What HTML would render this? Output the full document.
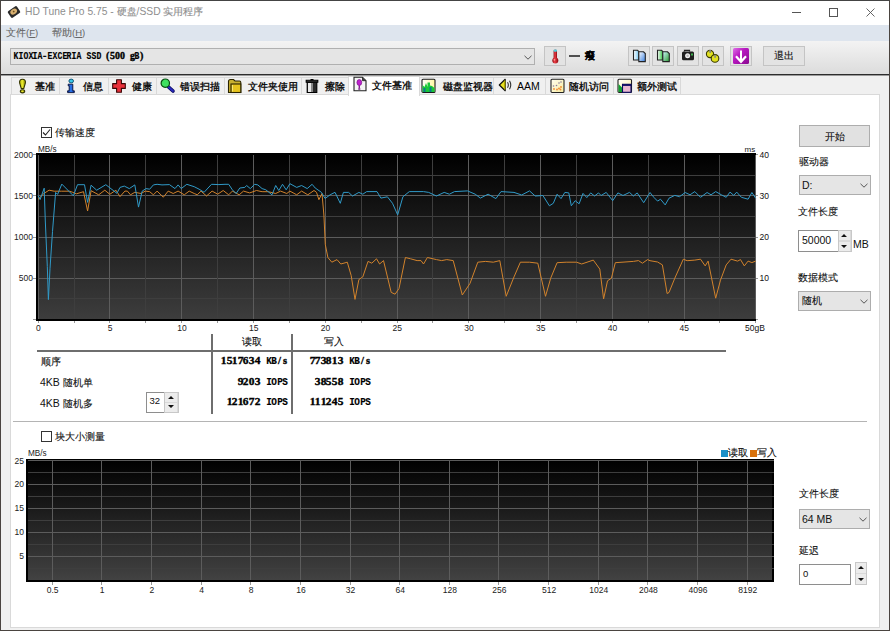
<!DOCTYPE html><html><head><meta charset="utf-8"><style>
*{margin:0;padding:0;box-sizing:border-box}
html,body{width:890px;height:631px;overflow:hidden;background:#f0f0f0;font-family:"Liberation Sans",sans-serif}
.abs{position:absolute}
.t{position:absolute;white-space:nowrap;line-height:1}
.btn{position:absolute;background:#e3e3e3;border:1px solid #c4c4c4}
.btn2{position:absolute;background:#e1e1e1;border:1px solid #adadad}
.cmb{position:absolute;background:#e5e5e5;border:1px solid #adadad}
.tab{position:absolute;top:77px;height:17px;background:#f0f0f0;border:1px solid #d9d9d9;border-bottom:none}
.chev{position:absolute;width:5px;height:5px;border-right:1px solid #444;border-bottom:1px solid #444;transform:rotate(45deg)}
</style></head><body>
<div class="abs" style="left:0;top:0;width:890px;height:631px;border:1px solid #4a4440;border-top-color:#444"></div><div class="abs" style="left:1px;top:1px;width:888px;height:24px;background:#fff"></div><div class="abs" style="left:1px;top:25px;width:888px;height:16px;background:#dee5ee"></div><div class="abs" style="left:1px;top:41px;width:888px;height:33px;background:linear-gradient(#f3f3f3,#dcdcdc)"></div><div class="abs" style="left:1px;top:74px;width:888px;height:1px;background:#2c2c2c"></div><div class="abs" style="left:1px;top:75px;width:888px;height:1px;background:#9a9a9a"></div><div class="abs" style="left:10px;top:94px;width:870px;height:534px;background:#fff;border:1px solid #d9d9d9"></div><div class="tab" style="left:11px;width:49px"></div><div class="tab" style="left:59px;width:50px"></div><div class="tab" style="left:108px;width:49px"></div><div class="tab" style="left:156px;width:69px"></div><div class="tab" style="left:224px;width:78px"></div><div class="tab" style="left:301px;width:48px"></div><div class="abs" style="left:348px;top:76px;width:72px;height:20px;background:#fff;border:1px solid #d9d9d9;border-bottom:none"></div><div class="tab" style="left:419px;width:75px"></div><div class="tab" style="left:493px;width:53px"></div><div class="tab" style="left:545px;width:69px"></div><div class="tab" style="left:613px;width:68px"></div><svg class="abs" style="left:0;top:0" width="890" height="631" viewBox="0 0 890 631"><defs><linearGradient id="g1" x1="0" y1="0" x2="0" y2="1"><stop offset="0" stop-color="#000"/><stop offset="1" stop-color="#3d3d3d"/></linearGradient><linearGradient id="g2" x1="0" y1="0" x2="0" y2="1"><stop offset="0" stop-color="#000"/><stop offset="1" stop-color="#424242"/></linearGradient></defs><rect x="36" y="153" width="720" height="168" fill="#000"/><rect x="38" y="155" width="718" height="164" fill="url(#g1)"/><rect x="38" y="175" width="718" height="1" fill="#3e3e3e"/><rect x="38" y="195" width="718" height="1" fill="#5c5c5c"/><rect x="38" y="216" width="718" height="1" fill="#3e3e3e"/><rect x="38" y="237" width="718" height="1" fill="#5c5c5c"/><rect x="38" y="257" width="718" height="1" fill="#3e3e3e"/><rect x="38" y="278" width="718" height="1" fill="#5c5c5c"/><rect x="38" y="298" width="718" height="1" fill="#3e3e3e"/><rect x="38" y="155" width="1" height="164" fill="#5c5c5c"/><rect x="74" y="155" width="1" height="164" fill="#3e3e3e"/><rect x="109" y="155" width="1" height="164" fill="#5c5c5c"/><rect x="145" y="155" width="1" height="164" fill="#3e3e3e"/><rect x="181" y="155" width="1" height="164" fill="#5c5c5c"/><rect x="217" y="155" width="1" height="164" fill="#3e3e3e"/><rect x="253" y="155" width="1" height="164" fill="#5c5c5c"/><rect x="289" y="155" width="1" height="164" fill="#3e3e3e"/><rect x="325" y="155" width="1" height="164" fill="#5c5c5c"/><rect x="361" y="155" width="1" height="164" fill="#3e3e3e"/><rect x="397" y="155" width="1" height="164" fill="#5c5c5c"/><rect x="432" y="155" width="1" height="164" fill="#3e3e3e"/><rect x="468" y="155" width="1" height="164" fill="#5c5c5c"/><rect x="504" y="155" width="1" height="164" fill="#3e3e3e"/><rect x="540" y="155" width="1" height="164" fill="#5c5c5c"/><rect x="576" y="155" width="1" height="164" fill="#3e3e3e"/><rect x="612" y="155" width="1" height="164" fill="#5c5c5c"/><rect x="648" y="155" width="1" height="164" fill="#3e3e3e"/><rect x="684" y="155" width="1" height="164" fill="#5c5c5c"/><rect x="719" y="155" width="1" height="164" fill="#3e3e3e"/><rect x="755" y="155" width="1" height="164" fill="#5c5c5c"/><polyline points="38,199.3 44.1,193.3 49.1,190.2 54.2,191.2 61.3,191.2 69.4,191.2 72.4,192.2 76.4,193.8 83.5,191.7 87.6,211 91.1,190.7 98.7,194.8 104.8,190.2 109.8,194.3 115.9,190.2 120,196.6 124.9,191.1 127.4,191.1 130.5,194.8 134.8,192.3 141,193.5 145.3,191.1 149.7,191.7 153.4,194.8 157.1,191.1 163.3,197.2 168.2,191.1 173.2,193.5 178.1,191.1 184.3,194.8 189.2,191.1 194.2,193.5 197.3,194.8 201,191.1 206.5,196 212.1,191.1 217.7,194.2 223.2,190.5 228.7,194.8 232.4,191.1 239.2,194.8 243.5,191.1 249.7,192.9 256.5,190.5 262.1,191.7 268.3,191.7 275.7,193.5 280.6,191.1 286.8,193.5 289.9,191.1 296.7,194.8 301.6,191.1 307.8,194.8 314,190.5 316.5,192.3 318.9,199.7 322,193.5 323.9,215 325.3,244.6 327.9,257.5 331.8,262.2 337,259.6 340.8,264 347.3,262.2 351.2,275.6 355,299.4 358.9,279.5 362.8,276.9 368,261.4 371.8,263.2 376.5,258.8 379.6,264 383.5,260.6 391.2,292.4 395.1,294.2 399,288.5 405.4,257.5 410.6,258.8 417.1,260.6 421,260.6 423.5,264 427.4,257.5 436.4,259.6 441.6,260.6 446.8,259.6 453.2,260.6 462.3,295 470,283.4 477.8,262.2 485.5,261.4 493.3,262.2 499.8,260.6 506.2,296.3 514,276.9 520.4,262.2 529.5,262.2 537.8,263.2 545.5,296.3 550.7,278.2 557.1,262.7 566.2,262.2 576.5,262.2 581.7,264 593.3,260.1 599.8,269.1 603.6,298.9 607.5,280.8 611.4,278.2 615.3,262.7 633.4,261.4 638.5,260.6 642.4,263.2 647.6,259.6 650,260.7 657.6,262 662.4,264.9 667.1,293.5 669,292.5 674.8,278.2 683.3,259.2 687.1,260.7 694.8,260.1 700.5,259.2 705.2,265.9 708.1,261.1 715.7,298.2 720.5,280.1 726.2,264.9 731,259.2 737.6,261.1 740.5,259.6 744.3,265.9 748.1,261.1 751.9,262.6 755.7,261.1" fill="none" stroke="#d2832c" stroke-width="1.0" stroke-linejoin="round"/><polyline points="38,195.5 40.1,199.6 44.2,188.2 45.3,221 47.3,266.6 48.4,299.6 50,268.7 52.5,231.5 55.6,192.4 57.6,194.4 61.8,184.1 73.4,195.8 77.5,184.7 84.5,184.7 87.6,202.4 91.1,185.2 96.7,190.2 105.8,184.7 116.9,193.3 120,187.4 124.3,186.1 129.3,188.6 134.8,184.9 138.5,207.1 142.2,191.1 146,188.6 149.7,189.2 153.4,184.9 157.1,184.3 162,184.9 169.4,184.6 175,188.6 178.1,184.9 181.2,188.6 186.8,184.3 194.2,186.7 199.1,189.2 204.1,192.3 211.5,184.3 218.9,184.6 225,184.3 228.7,184.3 232.4,189.8 236.1,193.5 239.8,188 244.8,187.4 246.6,185.5 250.3,188.6 254.7,184.3 257.8,184.9 262.1,188.6 265.8,189.8 272,194.8 275.7,185.5 278.8,190.5 282.5,184.3 286.2,189.8 289.9,183.7 296.7,187.4 301.6,185.5 307.2,188.6 312.1,184.3 315.2,188 321.4,192.3 325.1,198.5 330.1,194.8 335,192.3 340.3,203.3 343.4,192.4 348.6,192.4 352.5,196 358.9,192.4 362.8,194.2 366.7,191.6 377,191.6 380.9,198.1 387.4,196.8 392.5,203.3 397.7,214.9 402.9,196.8 409.3,191.6 423.5,191.6 428.7,192.4 436.4,196 444.2,192.4 449.4,194.2 454.5,191.6 467.5,190.9 475.2,194.2 480.4,198.1 488.1,194.2 495.9,198.6 501,191.6 514,192.4 521.7,195 529.5,190.9 535.2,196 542.9,195.5 549.4,205.8 553.3,203.3 557.1,194.2 561,198.6 564.9,192.4 568.8,192.9 571.3,205.8 575.2,200.7 579.1,203.8 583,193.4 586.8,197.6 590.7,192.9 594.6,196 598.5,192.9 601.1,195.5 606.2,192.4 612.7,200.7 617.9,192.9 623,195.5 629.5,192.4 633.4,196 637.2,192.9 643.7,202.7 650,192.5 653.8,197.3 657.6,201.1 660.5,199.2 665.2,204.9 669,198.2 674.8,195.4 679.5,196.7 685.2,192.5 690,194.8 694.8,191.6 700.5,197.3 707.1,192.5 711,194.8 715.7,191.6 721.4,194.8 726.2,197.3 730,192.1 733.8,195.4 736.7,192.1 741.4,197.3 748.1,199.2 751.9,192.5 755.7,198.2" fill="none" stroke="#309ac8" stroke-width="1.0" stroke-linejoin="round"/><rect x="38" y="321" width="1" height="2" fill="#999"/><rect x="74" y="321" width="1" height="2" fill="#999"/><rect x="109" y="321" width="1" height="2" fill="#999"/><rect x="145" y="321" width="1" height="2" fill="#999"/><rect x="181" y="321" width="1" height="2" fill="#999"/><rect x="217" y="321" width="1" height="2" fill="#999"/><rect x="253" y="321" width="1" height="2" fill="#999"/><rect x="289" y="321" width="1" height="2" fill="#999"/><rect x="325" y="321" width="1" height="2" fill="#999"/><rect x="361" y="321" width="1" height="2" fill="#999"/><rect x="397" y="321" width="1" height="2" fill="#999"/><rect x="432" y="321" width="1" height="2" fill="#999"/><rect x="468" y="321" width="1" height="2" fill="#999"/><rect x="504" y="321" width="1" height="2" fill="#999"/><rect x="540" y="321" width="1" height="2" fill="#999"/><rect x="576" y="321" width="1" height="2" fill="#999"/><rect x="612" y="321" width="1" height="2" fill="#999"/><rect x="648" y="321" width="1" height="2" fill="#999"/><rect x="684" y="321" width="1" height="2" fill="#999"/><rect x="719" y="321" width="1" height="2" fill="#999"/><rect x="755" y="321" width="1" height="2" fill="#999"/><rect x="33" y="154" width="3" height="1" fill="#999"/><rect x="756" y="154" width="2" height="1" fill="#999"/><rect x="33" y="195" width="3" height="1" fill="#999"/><rect x="756" y="195" width="2" height="1" fill="#999"/><rect x="33" y="237" width="3" height="1" fill="#999"/><rect x="756" y="237" width="2" height="1" fill="#999"/><rect x="33" y="278" width="3" height="1" fill="#999"/><rect x="756" y="278" width="2" height="1" fill="#999"/><rect x="33" y="319" width="3" height="1" fill="#999"/><rect x="756" y="319" width="2" height="1" fill="#999"/><rect x="26" y="459" width="748" height="123" fill="#000"/><rect x="28" y="460" width="744" height="120" fill="url(#g2)"/><rect x="28" y="460" width="746" height="1" fill="#5c5c5c"/><rect x="28" y="472" width="746" height="1" fill="#3e3e3e"/><rect x="28" y="484" width="746" height="1" fill="#5c5c5c"/><rect x="28" y="496" width="746" height="1" fill="#3e3e3e"/><rect x="28" y="508" width="746" height="1" fill="#5c5c5c"/><rect x="28" y="520" width="746" height="1" fill="#3e3e3e"/><rect x="28" y="532" width="746" height="1" fill="#5c5c5c"/><rect x="28" y="544" width="746" height="1" fill="#3e3e3e"/><rect x="28" y="556" width="746" height="1" fill="#5c5c5c"/><rect x="28" y="568" width="746" height="1" fill="#3e3e3e"/><rect x="52" y="460" width="1" height="120" fill="#5c5c5c"/><rect x="52" y="582" width="1" height="3" fill="#999"/><rect x="101" y="460" width="1" height="120" fill="#5c5c5c"/><rect x="101" y="582" width="1" height="3" fill="#999"/><rect x="151" y="460" width="1" height="120" fill="#5c5c5c"/><rect x="151" y="582" width="1" height="3" fill="#999"/><rect x="201" y="460" width="1" height="120" fill="#5c5c5c"/><rect x="201" y="582" width="1" height="3" fill="#999"/><rect x="250" y="460" width="1" height="120" fill="#5c5c5c"/><rect x="250" y="582" width="1" height="3" fill="#999"/><rect x="300" y="460" width="1" height="120" fill="#5c5c5c"/><rect x="300" y="582" width="1" height="3" fill="#999"/><rect x="350" y="460" width="1" height="120" fill="#5c5c5c"/><rect x="350" y="582" width="1" height="3" fill="#999"/><rect x="399" y="460" width="1" height="120" fill="#5c5c5c"/><rect x="399" y="582" width="1" height="3" fill="#999"/><rect x="449" y="460" width="1" height="120" fill="#5c5c5c"/><rect x="449" y="582" width="1" height="3" fill="#999"/><rect x="498" y="460" width="1" height="120" fill="#5c5c5c"/><rect x="498" y="582" width="1" height="3" fill="#999"/><rect x="548" y="460" width="1" height="120" fill="#5c5c5c"/><rect x="548" y="582" width="1" height="3" fill="#999"/><rect x="598" y="460" width="1" height="120" fill="#5c5c5c"/><rect x="598" y="582" width="1" height="3" fill="#999"/><rect x="647" y="460" width="1" height="120" fill="#5c5c5c"/><rect x="647" y="582" width="1" height="3" fill="#999"/><rect x="697" y="460" width="1" height="120" fill="#5c5c5c"/><rect x="697" y="582" width="1" height="3" fill="#999"/><rect x="747" y="460" width="1" height="120" fill="#5c5c5c"/><rect x="747" y="582" width="1" height="3" fill="#999"/><rect x="37" y="350" width="689" height="2" fill="#6e6e6e"/><rect x="211" y="334" width="2" height="80" fill="#6e6e6e"/><rect x="291" y="334" width="2" height="80" fill="#6e6e6e"/><rect x="13" y="421" width="854" height="1" fill="#b4b4b4"/></svg><svg class="abs" style="left:7px;top:5px" width="14" height="14" viewBox="0 0 14 14"><g transform="rotate(-35 7 7)"><rect x="1.5" y="3" width="11" height="8" rx="1.5" fill="#2a2a2a"/><ellipse cx="7" cy="6.5" rx="3.6" ry="2.6" fill="#d8b070"/><circle cx="7" cy="6.5" r="0.9" fill="#6b4e1e"/></g></svg><div class="t" style="left:25px;top:7.2px;font-size:10.3px;color:#8e8e8e;">HD Tune Pro 5.75 - <span style="font-size:10px;-webkit-text-stroke:0.12px currentColor">硬盘</span>/SSD <span style="font-size:10px;-webkit-text-stroke:0.12px currentColor">实用程序</span></div>
<div class="abs" style="left:792px;top:12px;width:9px;height:1px;background:#555"></div><div class="abs" style="left:829px;top:8px;width:9px;height:9px;border:1px solid #555"></div><svg class="abs" style="left:866px;top:8px" width="9" height="9" viewBox="0 0 9 9"><path d="M0.5 0.5L8.5 8.5M8.5 0.5L0.5 8.5" stroke="#555" stroke-width="0.9"/></svg><div class="t" style="left:6px;top:28px;font-size:9.5px;color:#666;"><span style="font-size:10px;-webkit-text-stroke:0.12px currentColor">文件</span>(<u>F</u>)</div>
<div class="t" style="left:52px;top:28px;font-size:9.5px;color:#666;"><span style="font-size:10px;-webkit-text-stroke:0.12px currentColor">帮助</span>(<u>H</u>)</div>
<div class="abs" style="left:10px;top:48px;width:525px;height:17px;background:#e5e5e5;border:1px solid #b0b0b0"></div><div class="t" style="left:13.00px;top:50.3px;font:bold 10px 'Liberation Serif',serif;color:#000;-webkit-text-stroke:0.35px #000"><span style="display:inline-block;width:4.87px;text-align:center;font-family:'Liberation Mono',monospace;-webkit-text-stroke:0.15px #000"><span style="display:inline-block;transform:scaleX(0.812)">K</span></span><span style="display:inline-block;width:4.87px;text-align:center;font-family:'Liberation Mono',monospace;-webkit-text-stroke:0.15px #000"><span style="display:inline-block;transform:scaleX(0.812)">I</span></span><span style="display:inline-block;width:4.87px;text-align:center;font-family:'Liberation Mono',monospace;-webkit-text-stroke:0.15px #000"><span style="display:inline-block;transform:scaleX(0.812)">O</span></span><span style="display:inline-block;width:4.87px;text-align:center;font-family:'Liberation Mono',monospace;-webkit-text-stroke:0.15px #000"><span style="display:inline-block;transform:scaleX(0.812)">X</span></span><span style="display:inline-block;width:4.87px;text-align:center;font-family:'Liberation Mono',monospace;-webkit-text-stroke:0.15px #000"><span style="display:inline-block;transform:scaleX(0.812)">I</span></span><span style="display:inline-block;width:4.87px;text-align:center;font-family:'Liberation Mono',monospace;-webkit-text-stroke:0.15px #000"><span style="display:inline-block;transform:scaleX(0.812)">A</span></span><span style="display:inline-block;width:4.87px;text-align:center"><span style="display:inline-block;transform:scaleX(1.000)">-</span></span><span style="display:inline-block;width:4.87px;text-align:center;font-family:'Liberation Mono',monospace;-webkit-text-stroke:0.15px #000"><span style="display:inline-block;transform:scaleX(0.812)">E</span></span><span style="display:inline-block;width:4.87px;text-align:center;font-family:'Liberation Mono',monospace;-webkit-text-stroke:0.15px #000"><span style="display:inline-block;transform:scaleX(0.812)">X</span></span><span style="display:inline-block;width:4.87px;text-align:center;font-family:'Liberation Mono',monospace;-webkit-text-stroke:0.15px #000"><span style="display:inline-block;transform:scaleX(0.812)">C</span></span><span style="display:inline-block;width:4.87px;text-align:center;font-family:'Liberation Mono',monospace;-webkit-text-stroke:0.15px #000"><span style="display:inline-block;transform:scaleX(0.812)">E</span></span><span style="display:inline-block;width:4.87px;text-align:center;font-family:'Liberation Mono',monospace;-webkit-text-stroke:0.15px #000"><span style="display:inline-block;transform:scaleX(0.812)">R</span></span><span style="display:inline-block;width:4.87px;text-align:center;font-family:'Liberation Mono',monospace;-webkit-text-stroke:0.15px #000"><span style="display:inline-block;transform:scaleX(0.812)">I</span></span><span style="display:inline-block;width:4.87px;text-align:center;font-family:'Liberation Mono',monospace;-webkit-text-stroke:0.15px #000"><span style="display:inline-block;transform:scaleX(0.812)">A</span></span><span style="display:inline-block;width:4.87px"></span><span style="display:inline-block;width:4.87px;text-align:center;font-family:'Liberation Mono',monospace;-webkit-text-stroke:0.15px #000"><span style="display:inline-block;transform:scaleX(0.812)">S</span></span><span style="display:inline-block;width:4.87px;text-align:center;font-family:'Liberation Mono',monospace;-webkit-text-stroke:0.15px #000"><span style="display:inline-block;transform:scaleX(0.812)">S</span></span><span style="display:inline-block;width:4.87px;text-align:center;font-family:'Liberation Mono',monospace;-webkit-text-stroke:0.15px #000"><span style="display:inline-block;transform:scaleX(0.812)">D</span></span><span style="display:inline-block;width:4.87px"></span><span style="display:inline-block;width:4.87px;text-align:center"><span style="display:inline-block;transform:scaleX(1.000)">(</span></span><span style="display:inline-block;width:4.87px;text-align:center"><span style="display:inline-block;transform:scaleX(0.993)">5</span></span><span style="display:inline-block;width:4.87px;text-align:center"><span style="display:inline-block;transform:scaleX(0.993)">0</span></span><span style="display:inline-block;width:4.87px;text-align:center"><span style="display:inline-block;transform:scaleX(0.993)">0</span></span><span style="display:inline-block;width:4.87px"></span><span style="display:inline-block;width:4.87px;text-align:center"><span style="display:inline-block;transform:scaleX(0.993)">g</span></span><span style="display:inline-block;width:4.87px;text-align:center;font-family:'Liberation Mono',monospace;-webkit-text-stroke:0.15px #000"><span style="display:inline-block;transform:scaleX(0.812)">B</span></span><span style="display:inline-block;width:4.87px;text-align:center"><span style="display:inline-block;transform:scaleX(1.000)">)</span></span></div>
<svg class="abs" style="left:524px;top:54.5px" width="8" height="5" viewBox="0 0 8 5"><path d="M0.5 0.8L4 4.2L7.5 0.8" stroke="#555" stroke-width="1" fill="none"/></svg><div class="btn" style="left:544px;top:46px;width:22px;height:20px"></div><svg class="abs" style="left:544px;top:46px" width="22" height="20" viewBox="544 46 22 20"><defs><linearGradient id="th" x1="0" y1="0" x2="1" y2="0"><stop offset="0" stop-color="#8a0a10"/><stop offset=".4" stop-color="#f04048"/><stop offset="1" stop-color="#8a0a10"/></linearGradient></defs><rect x="553.6" y="49.5" width="3.4" height="10" rx="1.6" fill="url(#th)"/><rect x="553.6" y="49.5" width="3.4" height="2.2" rx="1" fill="#50d0e0"/><circle cx="555.3" cy="60.5" r="3" fill="url(#th)"/><circle cx="554.4" cy="59.8" r="0.9" fill="#ff9a9a"/></svg><div class="abs" style="left:569px;top:55px;width:11px;height:1.6px;background:#505050"></div><div class="t" style="left:585px;top:50px;font-size:11px;color:#000;font-weight:bold"><span style="font-size:10px;-webkit-text-stroke:0.12px currentColor">癈</span></div>
<div class="btn" style="left:628px;top:46px;width:22px;height:20px"></div><div class="btn" style="left:652px;top:46px;width:22px;height:20px"></div><div class="btn" style="left:677px;top:46px;width:22px;height:20px"></div><div class="btn" style="left:702px;top:46px;width:22px;height:20px"></div><div class="btn" style="left:730px;top:46px;width:22px;height:20px"></div><div class="btn" style="left:763px;top:46px;width:42px;height:20px"></div><div class="t" style="left:774px;top:50px;font-size:11px;color:#111;"><span style="font-size:10px;-webkit-text-stroke:0.12px currentColor">退出</span></div>
<svg class="abs" style="left:628px;top:46px" width="22" height="20" viewBox="628 46 22 20"><defs><linearGradient id="cp1" x1="0" y1="0" x2="1" y2="0"><stop offset="0" stop-color="#fff"/><stop offset="1" stop-color="#7ac8f0"/></linearGradient><linearGradient id="cp2" x1="0" y1="0" x2="1" y2="1"><stop offset="0" stop-color="#fff"/><stop offset="1" stop-color="#3a80e0"/></linearGradient></defs><path d="M633.5 50.2H637.5L638.8 51.5V60H633.5Z" fill="url(#cp1)" stroke="#222" stroke-width="1.1"/><path d="M638.8 51.8H643.5L645.3 53.6V61.6H638.8Z" fill="url(#cp2)" stroke="#222" stroke-width="1.1"/></svg><svg class="abs" style="left:652px;top:46px" width="22" height="20" viewBox="652 46 22 20"><defs><linearGradient id="cg1" x1="0" y1="0" x2="1" y2="0"><stop offset="0" stop-color="#fff"/><stop offset="1" stop-color="#30c040"/></linearGradient><linearGradient id="cg2" x1="0" y1="0" x2="1" y2="1"><stop offset="0" stop-color="#d0f8ff"/><stop offset="1" stop-color="#2a9a30"/></linearGradient></defs><path d="M657.5 50.2H661.5L662.8 51.5V60H657.5Z" fill="url(#cg1)" stroke="#222" stroke-width="1.1"/><path d="M662.8 51.8H667.5L669.3 53.6V61.6H662.8Z" fill="url(#cg2)" stroke="#222" stroke-width="1.1"/></svg><svg class="abs" style="left:677px;top:46px" width="22" height="20" viewBox="677 46 22 20"><path d="M684.5 51.5V50.3H689.5V51.5" stroke="#222" stroke-width="1.2" fill="none"/><rect x="682" y="51.5" width="12" height="8.8" rx="1.5" fill="#1e1e1e"/><circle cx="687.6" cy="55.8" r="2.5" fill="#f0f0f0"/><circle cx="687.6" cy="55.8" r="1.2" fill="#bbb"/><rect x="691" y="53.5" width="2" height="2" fill="#3ab04a"/></svg><svg class="abs" style="left:702px;top:46px" width="22" height="20" viewBox="702 46 22 20"><g stroke="#3a3a00" stroke-width="1.1"><circle cx="710" cy="54" r="3.6" fill="#e0e020"/><circle cx="715" cy="58.4" r="3.8" fill="#e0e020"/></g><rect x="709.3" y="50" width="1.6" height="3" fill="#888"/><rect x="714.3" y="54.8" width="1.6" height="3" fill="#888"/></svg><svg class="abs" style="left:730px;top:46px" width="22" height="20" viewBox="730 46 22 20"><defs><linearGradient id="pg" x1="0" y1="0" x2="1" y2="1"><stop offset="0" stop-color="#e070e8"/><stop offset=".4" stop-color="#b818c0"/><stop offset="1" stop-color="#8a0a90"/></linearGradient></defs><rect x="733" y="48" width="16" height="16" rx="1.5" fill="url(#pg)"/><path d="M741 50.5V61" stroke="#fff" stroke-width="2"/><path d="M736 56.3L741 61.8L746 56.3" stroke="#fff" stroke-width="2.2" fill="none" stroke-linejoin="miter"/></svg><div class="t" style="left:35px;top:81px;font-size:10.5px;color:#000;"><span style="font-size:10px;-webkit-text-stroke:0.3px currentColor">基准</span></div>
<div class="t" style="left:83px;top:81px;font-size:10.5px;color:#000;"><span style="font-size:10px;-webkit-text-stroke:0.3px currentColor">信息</span></div>
<div class="t" style="left:132px;top:81px;font-size:10.5px;color:#000;"><span style="font-size:10px;-webkit-text-stroke:0.3px currentColor">健康</span></div>
<div class="t" style="left:180px;top:81px;font-size:10.5px;color:#000;"><span style="font-size:10px;-webkit-text-stroke:0.3px currentColor">错误扫描</span></div>
<div class="t" style="left:248px;top:81px;font-size:10.5px;color:#000;"><span style="font-size:10px;-webkit-text-stroke:0.3px currentColor">文件夹使用</span></div>
<div class="t" style="left:325px;top:81px;font-size:10.5px;color:#000;"><span style="font-size:10px;-webkit-text-stroke:0.3px currentColor">擦除</span></div>
<div class="t" style="left:372px;top:80px;font-size:10.5px;color:#000;"><span style="font-size:10px;-webkit-text-stroke:0.3px currentColor">文件基准</span></div>
<div class="t" style="left:443px;top:81px;font-size:10.5px;color:#000;"><span style="font-size:10px;-webkit-text-stroke:0.3px currentColor">磁盘监视器</span></div>
<div class="t" style="left:517px;top:81px;font-size:10.5px;color:#000;">AAM</div>
<div class="t" style="left:569px;top:81px;font-size:10.5px;color:#000;"><span style="font-size:10px;-webkit-text-stroke:0.3px currentColor">随机访问</span></div>
<div class="t" style="left:637px;top:81px;font-size:10.5px;color:#000;"><span style="font-size:10px;-webkit-text-stroke:0.3px currentColor">额外测试</span></div>
<svg class="abs" style="left:18px;top:78px" width="9" height="16" viewBox="0 0 9 16"><defs><linearGradient id="ex" x1="0" y1="0" x2="1" y2="0"><stop offset="0" stop-color="#9a9a00"/><stop offset=".45" stop-color="#f0f030"/><stop offset="1" stop-color="#8a8a00"/></linearGradient></defs><path d="M4.5 1.2C2.2 1.2 1.3 2.8 1.6 4.8L3.3 10.6H5.7L7.4 4.8C7.7 2.8 6.8 1.2 4.5 1.2Z" fill="url(#ex)" stroke="#343400" stroke-width="1.1"/><ellipse cx="4.5" cy="13.3" rx="2.2" ry="1.6" fill="url(#ex)" stroke="#343400" stroke-width="1.1"/></svg><svg class="abs" style="left:66px;top:78px" width="10" height="16" viewBox="0 0 10 16"><defs><linearGradient id="inf" x1="0" y1="0" x2="1" y2="0"><stop offset="0" stop-color="#0a2a9a"/><stop offset=".5" stop-color="#2a7af0"/><stop offset="1" stop-color="#0a2a9a"/></linearGradient></defs><ellipse cx="5.2" cy="3" rx="2.3" ry="1.9" fill="#38c8e8" stroke="#0a4a6a" stroke-width="0.9"/><path d="M2.2 6.2H6.8V12.8H8.3V14.6H1.6V12.8H3.2V7.8H2.2Z" fill="url(#inf)" stroke="#06103a" stroke-width="0.9"/></svg><svg class="abs" style="left:112px;top:79px" width="15" height="15" viewBox="0 0 15 15"><path d="M4.6 0.7H9.4V4.6H13.3V9.4H9.4V13.3H4.6V9.4H0.7V4.6H4.6Z" fill="#e8303a" stroke="#3a0606" stroke-width="1.1" stroke-linejoin="round"/></svg><svg class="abs" style="left:159px;top:77px" width="17" height="17" viewBox="0 0 17 17"><line x1="9" y1="9.5" x2="14" y2="14" stroke="#0a0a60" stroke-width="3.6" stroke-linecap="round"/><line x1="9" y1="9.5" x2="14" y2="14" stroke="#2a2ac0" stroke-width="1.8" stroke-linecap="round"/><circle cx="6.3" cy="6.2" r="4.2" fill="#3ee060" stroke="#064a10" stroke-width="1.2"/></svg><svg class="abs" style="left:227px;top:78px" width="15" height="16" viewBox="0 0 15 16"><path d="M1.5 3.5Q1.5 1.5 3.5 1.5H6.5L8 3H12.5Q13.8 3 13.8 4.5V14.5H1.5Z" fill="#c8b030" stroke="#2a2400" stroke-width="1.1"/><rect x="4" y="6" width="9.8" height="8.5" fill="#e6c41e" stroke="#2a2400" stroke-width="1.1"/><rect x="5" y="7" width="1" height="6.5" fill="#f8e878"/></svg><svg class="abs" style="left:305px;top:78px" width="14" height="16" viewBox="0 0 14 16"><path d="M1.2 2.3H12.8V4.3H1.2Z" fill="#444" stroke="#000" stroke-width="1.1"/><path d="M5.5 1H8.5V2.3H5.5Z" fill="#000"/><path d="M2.2 4.3H11.8V14.5H2.2Z" fill="#2a2a2a" stroke="#000" stroke-width="1.1"/><rect x="3" y="5" width="3.5" height="9" fill="#e8e8e8"/><rect x="6.5" y="5" width="1.5" height="9" fill="#888"/></svg><svg class="abs" style="left:353px;top:76px" width="14" height="16" viewBox="0 0 14 16"><path d="M1 1.2H9.5L13 4.7V14.8H1Z" fill="#f4f4f4" stroke="#222" stroke-width="1.1"/><path d="M9.5 1.2V4.7H13" fill="#444" stroke="#222" stroke-width="0.8"/><ellipse cx="6.3" cy="6.5" rx="2.4" ry="3" fill="#c020d0" stroke="#6a0a7a" stroke-width="0.6"/><path d="M5.6 9.3H7V12.3H5.6Z" fill="#8a1a9a"/><ellipse cx="6.3" cy="13" rx="1.3" ry="0.8" fill="#6a0a7a"/></svg><svg class="abs" style="left:421px;top:78px" width="15" height="16" viewBox="0 0 15 16"><defs><linearGradient id="dm" x1="0" y1="0" x2="1" y2="0"><stop offset="0" stop-color="#ffffff"/><stop offset="1" stop-color="#fff8a0"/></linearGradient></defs><rect x="1" y="1.2" width="13" height="13.3" rx="1" fill="url(#dm)" stroke="#1a1a1a" stroke-width="1.1"/><path d="M1.5 14V7L3.5 9L5 5L6.5 9V4.5H9V7.5L11 8L13.5 10V14Z" fill="#18c838"/><rect x="2.5" y="10" width="2" height="4" fill="#0a7a8a"/><rect x="8.5" y="9" width="2" height="5" fill="#0a7a8a"/></svg><svg class="abs" style="left:498px;top:78px" width="16" height="15" viewBox="0 0 16 15"><path d="M1.3 7L7.2 1.3V12.7Z" fill="#e8e020" stroke="#111" stroke-width="1.2" stroke-linejoin="round"/><rect x="6" y="2.5" width="1.4" height="9" fill="#b0a800"/><path d="M9.5 4.2Q11.2 7 9.5 9.8M11.5 2.8Q14 7 11.5 11.2" stroke="#333" stroke-width="1.1" fill="none"/></svg><svg class="abs" style="left:550px;top:78px" width="15" height="16" viewBox="0 0 15 16"><defs><linearGradient id="ra" x1="0" y1="0" x2="1" y2="1"><stop offset="0" stop-color="#fffef0"/><stop offset="1" stop-color="#f8eca0"/></linearGradient></defs><rect x="1" y="1.2" width="13" height="13.3" rx="1" fill="url(#ra)" stroke="#222" stroke-width="1.1"/><g fill="#f08a30"><circle cx="4" cy="11" r="0.9"/><circle cx="7" cy="11.5" r="0.9"/><circle cx="9" cy="10.5" r="0.9"/><circle cx="11" cy="9" r="0.9"/><circle cx="10.5" cy="11.5" r="0.9"/></g><g fill="#8a7a9a"><circle cx="3.5" cy="8" r="0.8"/><circle cx="6.5" cy="7.5" r="0.8"/><circle cx="9" cy="5" r="0.8"/><circle cx="11" cy="4" r="0.8"/></g></svg><svg class="abs" style="left:617px;top:78px" width="16" height="16" viewBox="0 0 16 16"><defs><linearGradient id="et" x1="0" y1="0" x2="1" y2="1"><stop offset="0" stop-color="#ffffff"/><stop offset="1" stop-color="#fff4a0"/></linearGradient></defs><rect x="1" y="1.2" width="13.5" height="13.3" rx="1" fill="url(#et)" stroke="#222" stroke-width="1.1"/><path d="M1.5 14V6L3.5 8L5.5 10V14Z" fill="#10a030"/><rect x="5.5" y="6.3" width="8.5" height="8" fill="#e8b8d0" stroke="#0a0a60" stroke-width="1.1"/><rect x="5.5" y="6.3" width="8.5" height="1.6" fill="#0a0a60"/></svg><div class="abs" style="left:41px;top:127px;width:11px;height:11px;border:1px solid #333;background:#fff"></div><svg class="abs" style="left:42px;top:128px" width="9" height="9" viewBox="0 0 9 9"><path d="M1 4.5L3.5 7L8 1.5" stroke="#222" stroke-width="1.1" fill="none"/></svg><div class="t" style="left:55px;top:127px;font-size:10.5px;color:#111;"><span style="font-size:10px;-webkit-text-stroke:0.12px currentColor">传输速度</span></div>
<div class="t" style="left:38px;top:145.5px;font-size:8.2px;color:#222;">MB/s</div>
<div class="t" style="left:744.5px;top:145.5px;font-size:8px;color:#222;">ms</div>
<div class="t" style="right:857px;top:150.5px;font-size:8.5px;color:#222">2000</div>
<div class="t" style="right:857px;top:191.6px;font-size:8.5px;color:#222">1500</div>
<div class="t" style="right:857px;top:232.7px;font-size:8.5px;color:#222">1000</div>
<div class="t" style="right:857px;top:273.8px;font-size:8.5px;color:#222">500</div>
<div class="t" style="left:759.5px;top:150.5px;font-size:8.5px;color:#111;">40</div>
<div class="t" style="left:759.5px;top:191.6px;font-size:8.5px;color:#111;">30</div>
<div class="t" style="left:759.5px;top:232.7px;font-size:8.5px;color:#111;">20</div>
<div class="t" style="left:759.5px;top:273.8px;font-size:8.5px;color:#111;">10</div>
<div class="t" style="left:18.4px;width:40px;text-align:center;top:324px;font-size:8.5px;color:#222">0</div>
<div class="t" style="left:90.2px;width:40px;text-align:center;top:324px;font-size:8.5px;color:#222">5</div>
<div class="t" style="left:161.9px;width:40px;text-align:center;top:324px;font-size:8.5px;color:#222">10</div>
<div class="t" style="left:233.7px;width:40px;text-align:center;top:324px;font-size:8.5px;color:#222">15</div>
<div class="t" style="left:305.4px;width:40px;text-align:center;top:324px;font-size:8.5px;color:#222">20</div>
<div class="t" style="left:377.2px;width:40px;text-align:center;top:324px;font-size:8.5px;color:#222">25</div>
<div class="t" style="left:449.0px;width:40px;text-align:center;top:324px;font-size:8.5px;color:#222">30</div>
<div class="t" style="left:520.7px;width:40px;text-align:center;top:324px;font-size:8.5px;color:#222">35</div>
<div class="t" style="left:592.5px;width:40px;text-align:center;top:324px;font-size:8.5px;color:#222">40</div>
<div class="t" style="left:664.2px;width:40px;text-align:center;top:324px;font-size:8.5px;color:#222">45</div>
<div class="t" style="left:745px;top:324px;font-size:8.5px;color:#111;">50gB</div>
<div class="t" style="left:242px;top:336px;font-size:10.5px;color:#111;"><span style="font-size:10px;-webkit-text-stroke:0.12px currentColor">读取</span></div>
<div class="t" style="left:324px;top:336px;font-size:10.5px;color:#111;"><span style="font-size:10px;-webkit-text-stroke:0.12px currentColor">写入</span></div>
<div class="t" style="left:41px;top:356px;font-size:10.5px;color:#111;"><span style="font-size:10px;-webkit-text-stroke:0.12px currentColor">顺序</span></div>
<div class="t" style="left:40px;top:377.2px;font-size:10.5px;color:#111;">4KB <span style="font-size:10px;-webkit-text-stroke:0.12px currentColor">随机单</span></div>
<div class="t" style="left:40px;top:397.8px;font-size:10.5px;color:#111;">4KB <span style="font-size:10px;-webkit-text-stroke:0.12px currentColor">随机多</span></div>
<div class="t" style="left:220.80px;top:354.5px;font:bold 10.5px 'Liberation Serif',serif;color:#000;-webkit-text-stroke:0.35px #000"><span style="display:inline-block;width:5.6px;text-align:center"><span style="display:inline-block;transform:scaleX(1.088)">1</span></span><span style="display:inline-block;width:5.6px;text-align:center"><span style="display:inline-block;transform:scaleX(1.088)">5</span></span><span style="display:inline-block;width:5.6px;text-align:center"><span style="display:inline-block;transform:scaleX(1.088)">1</span></span><span style="display:inline-block;width:5.6px;text-align:center"><span style="display:inline-block;transform:scaleX(1.088)">7</span></span><span style="display:inline-block;width:5.6px;text-align:center"><span style="display:inline-block;transform:scaleX(1.088)">6</span></span><span style="display:inline-block;width:5.6px;text-align:center"><span style="display:inline-block;transform:scaleX(1.088)">3</span></span><span style="display:inline-block;width:5.6px;text-align:center"><span style="display:inline-block;transform:scaleX(1.088)">4</span></span><span style="display:inline-block;width:5.6px"></span><span style="display:inline-block;width:5.6px;text-align:center;font-family:'Liberation Mono',monospace;-webkit-text-stroke:0.15px #000"><span style="display:inline-block;transform:scaleX(0.889)">K</span></span><span style="display:inline-block;width:5.6px;text-align:center;font-family:'Liberation Mono',monospace;-webkit-text-stroke:0.15px #000"><span style="display:inline-block;transform:scaleX(0.889)">B</span></span><span style="display:inline-block;width:5.6px;text-align:center"><span style="display:inline-block;transform:scaleX(1.000)">/</span></span><span style="display:inline-block;width:5.6px;text-align:center"><span style="display:inline-block;transform:scaleX(1.000)">s</span></span></div>
<div class="t" style="left:309.40px;top:354.5px;font:bold 10.5px 'Liberation Serif',serif;color:#000;-webkit-text-stroke:0.35px #000"><span style="display:inline-block;width:5.6px;text-align:center"><span style="display:inline-block;transform:scaleX(1.088)">7</span></span><span style="display:inline-block;width:5.6px;text-align:center"><span style="display:inline-block;transform:scaleX(1.088)">7</span></span><span style="display:inline-block;width:5.6px;text-align:center"><span style="display:inline-block;transform:scaleX(1.088)">3</span></span><span style="display:inline-block;width:5.6px;text-align:center"><span style="display:inline-block;transform:scaleX(1.088)">8</span></span><span style="display:inline-block;width:5.6px;text-align:center"><span style="display:inline-block;transform:scaleX(1.088)">1</span></span><span style="display:inline-block;width:5.6px;text-align:center"><span style="display:inline-block;transform:scaleX(1.088)">3</span></span><span style="display:inline-block;width:5.6px"></span><span style="display:inline-block;width:5.6px;text-align:center;font-family:'Liberation Mono',monospace;-webkit-text-stroke:0.15px #000"><span style="display:inline-block;transform:scaleX(0.889)">K</span></span><span style="display:inline-block;width:5.6px;text-align:center;font-family:'Liberation Mono',monospace;-webkit-text-stroke:0.15px #000"><span style="display:inline-block;transform:scaleX(0.889)">B</span></span><span style="display:inline-block;width:5.6px;text-align:center"><span style="display:inline-block;transform:scaleX(1.000)">/</span></span><span style="display:inline-block;width:5.6px;text-align:center"><span style="display:inline-block;transform:scaleX(1.000)">s</span></span></div>
<div class="t" style="left:237.60px;top:375.8px;font:bold 10.5px 'Liberation Serif',serif;color:#000;-webkit-text-stroke:0.35px #000"><span style="display:inline-block;width:5.6px;text-align:center"><span style="display:inline-block;transform:scaleX(1.088)">9</span></span><span style="display:inline-block;width:5.6px;text-align:center"><span style="display:inline-block;transform:scaleX(1.088)">2</span></span><span style="display:inline-block;width:5.6px;text-align:center"><span style="display:inline-block;transform:scaleX(1.088)">0</span></span><span style="display:inline-block;width:5.6px;text-align:center"><span style="display:inline-block;transform:scaleX(1.088)">3</span></span><span style="display:inline-block;width:5.6px"></span><span style="display:inline-block;width:5.6px;text-align:center;font-family:'Liberation Mono',monospace;-webkit-text-stroke:0.15px #000"><span style="display:inline-block;transform:scaleX(0.889)">I</span></span><span style="display:inline-block;width:5.6px;text-align:center;font-family:'Liberation Mono',monospace;-webkit-text-stroke:0.15px #000"><span style="display:inline-block;transform:scaleX(0.889)">O</span></span><span style="display:inline-block;width:5.6px;text-align:center;font-family:'Liberation Mono',monospace;-webkit-text-stroke:0.15px #000"><span style="display:inline-block;transform:scaleX(0.889)">P</span></span><span style="display:inline-block;width:5.6px;text-align:center;font-family:'Liberation Mono',monospace;-webkit-text-stroke:0.15px #000"><span style="display:inline-block;transform:scaleX(0.889)">S</span></span></div>
<div class="t" style="left:315.00px;top:375.8px;font:bold 10.5px 'Liberation Serif',serif;color:#000;-webkit-text-stroke:0.35px #000"><span style="display:inline-block;width:5.6px;text-align:center"><span style="display:inline-block;transform:scaleX(1.088)">3</span></span><span style="display:inline-block;width:5.6px;text-align:center"><span style="display:inline-block;transform:scaleX(1.088)">8</span></span><span style="display:inline-block;width:5.6px;text-align:center"><span style="display:inline-block;transform:scaleX(1.088)">5</span></span><span style="display:inline-block;width:5.6px;text-align:center"><span style="display:inline-block;transform:scaleX(1.088)">5</span></span><span style="display:inline-block;width:5.6px;text-align:center"><span style="display:inline-block;transform:scaleX(1.088)">8</span></span><span style="display:inline-block;width:5.6px"></span><span style="display:inline-block;width:5.6px;text-align:center;font-family:'Liberation Mono',monospace;-webkit-text-stroke:0.15px #000"><span style="display:inline-block;transform:scaleX(0.889)">I</span></span><span style="display:inline-block;width:5.6px;text-align:center;font-family:'Liberation Mono',monospace;-webkit-text-stroke:0.15px #000"><span style="display:inline-block;transform:scaleX(0.889)">O</span></span><span style="display:inline-block;width:5.6px;text-align:center;font-family:'Liberation Mono',monospace;-webkit-text-stroke:0.15px #000"><span style="display:inline-block;transform:scaleX(0.889)">P</span></span><span style="display:inline-block;width:5.6px;text-align:center;font-family:'Liberation Mono',monospace;-webkit-text-stroke:0.15px #000"><span style="display:inline-block;transform:scaleX(0.889)">S</span></span></div>
<div class="t" style="left:226.40px;top:396px;font:bold 10.5px 'Liberation Serif',serif;color:#000;-webkit-text-stroke:0.35px #000"><span style="display:inline-block;width:5.6px;text-align:center"><span style="display:inline-block;transform:scaleX(1.088)">1</span></span><span style="display:inline-block;width:5.6px;text-align:center"><span style="display:inline-block;transform:scaleX(1.088)">2</span></span><span style="display:inline-block;width:5.6px;text-align:center"><span style="display:inline-block;transform:scaleX(1.088)">1</span></span><span style="display:inline-block;width:5.6px;text-align:center"><span style="display:inline-block;transform:scaleX(1.088)">6</span></span><span style="display:inline-block;width:5.6px;text-align:center"><span style="display:inline-block;transform:scaleX(1.088)">7</span></span><span style="display:inline-block;width:5.6px;text-align:center"><span style="display:inline-block;transform:scaleX(1.088)">2</span></span><span style="display:inline-block;width:5.6px"></span><span style="display:inline-block;width:5.6px;text-align:center;font-family:'Liberation Mono',monospace;-webkit-text-stroke:0.15px #000"><span style="display:inline-block;transform:scaleX(0.889)">I</span></span><span style="display:inline-block;width:5.6px;text-align:center;font-family:'Liberation Mono',monospace;-webkit-text-stroke:0.15px #000"><span style="display:inline-block;transform:scaleX(0.889)">O</span></span><span style="display:inline-block;width:5.6px;text-align:center;font-family:'Liberation Mono',monospace;-webkit-text-stroke:0.15px #000"><span style="display:inline-block;transform:scaleX(0.889)">P</span></span><span style="display:inline-block;width:5.6px;text-align:center;font-family:'Liberation Mono',monospace;-webkit-text-stroke:0.15px #000"><span style="display:inline-block;transform:scaleX(0.889)">S</span></span></div>
<div class="t" style="left:309.40px;top:396px;font:bold 10.5px 'Liberation Serif',serif;color:#000;-webkit-text-stroke:0.35px #000"><span style="display:inline-block;width:5.6px;text-align:center"><span style="display:inline-block;transform:scaleX(1.088)">1</span></span><span style="display:inline-block;width:5.6px;text-align:center"><span style="display:inline-block;transform:scaleX(1.088)">1</span></span><span style="display:inline-block;width:5.6px;text-align:center"><span style="display:inline-block;transform:scaleX(1.088)">1</span></span><span style="display:inline-block;width:5.6px;text-align:center"><span style="display:inline-block;transform:scaleX(1.088)">2</span></span><span style="display:inline-block;width:5.6px;text-align:center"><span style="display:inline-block;transform:scaleX(1.088)">4</span></span><span style="display:inline-block;width:5.6px;text-align:center"><span style="display:inline-block;transform:scaleX(1.088)">5</span></span><span style="display:inline-block;width:5.6px"></span><span style="display:inline-block;width:5.6px;text-align:center;font-family:'Liberation Mono',monospace;-webkit-text-stroke:0.15px #000"><span style="display:inline-block;transform:scaleX(0.889)">I</span></span><span style="display:inline-block;width:5.6px;text-align:center;font-family:'Liberation Mono',monospace;-webkit-text-stroke:0.15px #000"><span style="display:inline-block;transform:scaleX(0.889)">O</span></span><span style="display:inline-block;width:5.6px;text-align:center;font-family:'Liberation Mono',monospace;-webkit-text-stroke:0.15px #000"><span style="display:inline-block;transform:scaleX(0.889)">P</span></span><span style="display:inline-block;width:5.6px;text-align:center;font-family:'Liberation Mono',monospace;-webkit-text-stroke:0.15px #000"><span style="display:inline-block;transform:scaleX(0.889)">S</span></span></div>
<div class="abs" style="left:146px;top:392px;width:33px;height:21px;border:1px solid #8e8e8e;background:#fff"></div><div class="abs" style="left:164px;top:392px;width:15px;height:21px;background:#dadada;border:1px solid #c8c8c8"></div><div class="abs" style="left:165px;top:393px;width:12px;height:9px;background:#ececec"></div><div class="abs" style="left:165px;top:403px;width:12px;height:9px;background:#ececec"></div><svg class="abs" style="left:167px;top:395px" width="8" height="14" viewBox="0 0 8 14"><path d="M1 4L4 1L7 4Z M1 10L4 13L7 10Z" fill="#111"/></svg><div class="t" style="left:149.5px;top:395.6px;font-size:9.5px;color:#111;">32</div>
<div class="abs" style="left:41px;top:431px;width:11px;height:11px;border:1px solid #333;background:#fff"></div><div class="t" style="left:55px;top:431px;font-size:10.5px;color:#111;"><span style="font-size:10px;-webkit-text-stroke:0.12px currentColor">块大小测量</span></div>
<div class="t" style="left:28px;top:449.8px;font-size:8.2px;color:#222;">MB/s</div>
<div class="abs" style="left:721px;top:450px;width:7px;height:7px;background:#1a8fc8"></div><div class="t" style="left:728px;top:448px;font-size:10px;color:#111;"><span style="font-size:10px;-webkit-text-stroke:0.12px currentColor">读取</span></div>
<div class="abs" style="left:750px;top:450px;width:7px;height:7px;background:#d8700a"></div><div class="t" style="left:757px;top:448px;font-size:10px;color:#111;"><span style="font-size:10px;-webkit-text-stroke:0.12px currentColor">写入</span></div>
<div class="t" style="right:866px;top:456.5px;font-size:8.5px;color:#222">25</div>
<div class="t" style="right:866px;top:480.3px;font-size:8.5px;color:#222">20</div>
<div class="t" style="right:866px;top:504.1px;font-size:8.5px;color:#222">15</div>
<div class="t" style="right:866px;top:527.9px;font-size:8.5px;color:#222">10</div>
<div class="t" style="right:866px;top:551.7px;font-size:8.5px;color:#222">5</div>
<div class="t" style="left:27.6px;width:50px;text-align:center;top:585.5px;font-size:8.5px;color:#222">0.5</div>
<div class="t" style="left:77.2px;width:50px;text-align:center;top:585.5px;font-size:8.5px;color:#222">1</div>
<div class="t" style="left:126.9px;width:50px;text-align:center;top:585.5px;font-size:8.5px;color:#222">2</div>
<div class="t" style="left:176.5px;width:50px;text-align:center;top:585.5px;font-size:8.5px;color:#222">4</div>
<div class="t" style="left:226.2px;width:50px;text-align:center;top:585.5px;font-size:8.5px;color:#222">8</div>
<div class="t" style="left:275.9px;width:50px;text-align:center;top:585.5px;font-size:8.5px;color:#222">16</div>
<div class="t" style="left:325.5px;width:50px;text-align:center;top:585.5px;font-size:8.5px;color:#222">32</div>
<div class="t" style="left:375.2px;width:50px;text-align:center;top:585.5px;font-size:8.5px;color:#222">64</div>
<div class="t" style="left:424.8px;width:50px;text-align:center;top:585.5px;font-size:8.5px;color:#222">128</div>
<div class="t" style="left:474.4px;width:50px;text-align:center;top:585.5px;font-size:8.5px;color:#222">256</div>
<div class="t" style="left:524.1px;width:50px;text-align:center;top:585.5px;font-size:8.5px;color:#222">512</div>
<div class="t" style="left:573.8px;width:50px;text-align:center;top:585.5px;font-size:8.5px;color:#222">1024</div>
<div class="t" style="left:623.4px;width:50px;text-align:center;top:585.5px;font-size:8.5px;color:#222">2048</div>
<div class="t" style="left:673.0px;width:50px;text-align:center;top:585.5px;font-size:8.5px;color:#222">4096</div>
<div class="t" style="left:722.7px;width:50px;text-align:center;top:585.5px;font-size:8.5px;color:#222">8192</div>
<div class="btn2" style="left:799px;top:125px;width:71px;height:22px"></div><div class="t" style="left:825px;top:131px;font-size:10.5px;color:#111;"><span style="font-size:10px;-webkit-text-stroke:0.12px currentColor">开始</span></div>
<div class="t" style="left:799px;top:156px;font-size:10.5px;color:#111;"><span style="font-size:10px;-webkit-text-stroke:0.12px currentColor">驱动器</span></div>
<div class="cmb" style="left:799px;top:175px;width:72px;height:20px"></div><div class="t" style="left:802px;top:180px;font-size:10.5px;color:#111;">D:</div>
<svg class="abs" style="left:859.5px;top:183px" width="8" height="5" viewBox="0 0 8 5"><path d="M0.5 0.8L4 4.2L7.5 0.8" stroke="#555" stroke-width="1" fill="none"/></svg><div class="t" style="left:798px;top:206.2px;font-size:10.5px;color:#111;"><span style="font-size:10px;-webkit-text-stroke:0.12px currentColor">文件长度</span></div>
<div class="abs" style="left:798px;top:230px;width:54px;height:22px;border:1px solid #8e8e8e;background:#fff"></div><div class="abs" style="left:838px;top:230px;width:14px;height:22px;background:#dadada;border:1px solid #c8c8c8"></div><div class="abs" style="left:839px;top:231px;width:11px;height:9px;background:#ececec"></div><div class="abs" style="left:839px;top:242px;width:11px;height:9px;background:#ececec"></div><svg class="abs" style="left:840px;top:233px" width="8" height="16" viewBox="0 0 8 16"><path d="M1 4L4 1L7 4Z M1 12L4 15L7 12Z" fill="#111"/></svg><div class="t" style="left:802px;top:235px;font-size:10.5px;color:#111;">50000</div>
<div class="t" style="left:853px;top:239px;font-size:10.5px;color:#111;">MB</div>
<div class="t" style="left:798px;top:271.6px;font-size:10.5px;color:#111;"><span style="font-size:10px;-webkit-text-stroke:0.12px currentColor">数据模式</span></div>
<div class="cmb" style="left:798px;top:291px;width:73px;height:20px"></div><div class="t" style="left:802px;top:295.2px;font-size:10.5px;color:#111;"><span style="font-size:10px;-webkit-text-stroke:0.12px currentColor">随机</span></div>
<svg class="abs" style="left:859.5px;top:299px" width="8" height="5" viewBox="0 0 8 5"><path d="M0.5 0.8L4 4.2L7.5 0.8" stroke="#555" stroke-width="1" fill="none"/></svg><div class="t" style="left:799px;top:488px;font-size:10.5px;color:#111;"><span style="font-size:10px;-webkit-text-stroke:0.12px currentColor">文件长度</span></div>
<div class="cmb" style="left:799px;top:509px;width:71px;height:20px"></div><div class="t" style="left:802px;top:514px;font-size:10.5px;color:#111;">64 MB</div>
<svg class="abs" style="left:859px;top:517px" width="8" height="5" viewBox="0 0 8 5"><path d="M0.5 0.8L4 4.2L7.5 0.8" stroke="#555" stroke-width="1" fill="none"/></svg><div class="t" style="left:799px;top:545px;font-size:10.5px;color:#111;"><span style="font-size:10px;-webkit-text-stroke:0.12px currentColor">延迟</span></div>
<div class="abs" style="left:799px;top:564px;width:52px;height:21px;border:1px solid #8e8e8e;background:#fff"></div><div class="t" style="left:803px;top:568.6px;font-size:9.5px;color:#111;">0</div>
<div class="abs" style="left:855px;top:562px;width:12px;height:23px;background:#dadada;border:1px solid #c8c8c8"></div><div class="abs" style="left:856px;top:563px;width:10px;height:10px;background:#ececec"></div><div class="abs" style="left:856px;top:574px;width:10px;height:10px;background:#ececec"></div><svg class="abs" style="left:857px;top:565px" width="8" height="17" viewBox="0 0 8 17"><path d="M1 4L4 1L7 4Z M1 13L4 16L7 13Z" fill="#111"/></svg></body></html>
